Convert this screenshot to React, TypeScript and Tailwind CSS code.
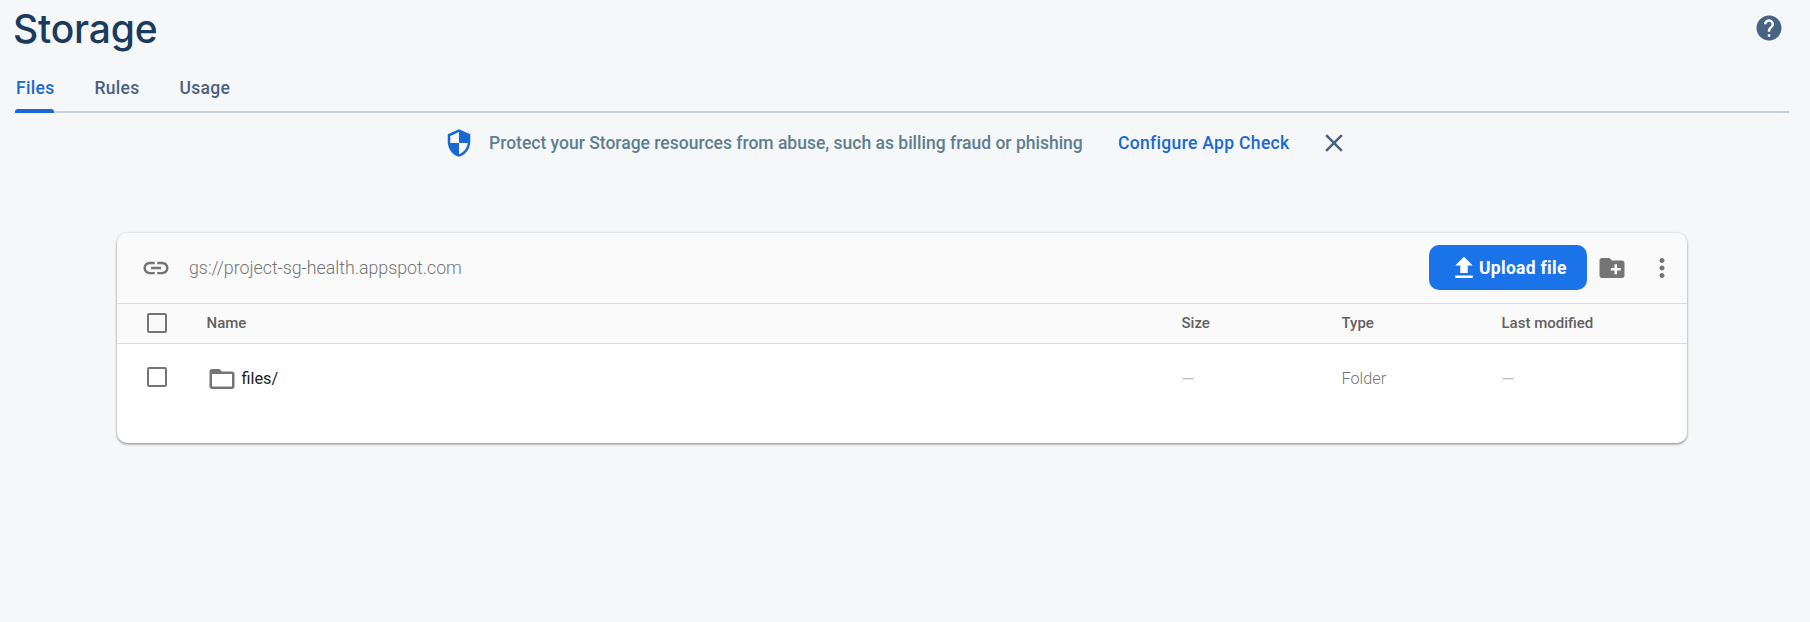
import type { ReactNode } from 'react';

function Icon({ d, className = '' }: { d: string; className?: string }) {
  return (
    <svg viewBox="0 0 24 24" className={`h-[30px] w-[30px] shrink-0 fill-current ${className}`} aria-hidden="true">
      <path d={d} />
    </svg>
  );
}

const icons = {
  help: 'M12 2C6.48 2 2 6.48 2 12s4.48 10 10 10 10-4.48 10-10S17.52 2 12 2zm1 17h-2v-2h2v2zm2.07-7.75l-.9.92C13.45 12.9 13 13.5 13 15h-2v-.5c0-1.1.45-2.1 1.17-2.83l1.24-1.26c.37-.36.59-.86.59-1.41 0-1.1-.9-2-2-2s-2 .9-2 2H8c0-2.21 1.79-4 4-4s4 1.79 4 4c0 .88-.36 1.68-.93 2.25z',
  shield: 'M12 1L3 5v6c0 5.55 3.84 10.74 9 12 5.16-1.26 9-6.45 9-12V5l-9-4zm0 10.99h7c-.53 4.12-3.28 7.79-7 8.94V12H5V6.3l7-3.11v8.8z',
  close: 'M19 6.41L17.59 5 12 10.59 6.41 5 5 6.41 10.59 12 5 17.59 6.41 19 12 13.41 17.59 19 19 17.59 13.41 12z',
  link: 'M3.9 12c0-1.71 1.39-3.1 3.1-3.1h4V7H7c-2.76 0-5 2.24-5 5s2.24 5 5 5h4v-1.9H7c-1.71 0-3.1-1.39-3.1-3.1zM8 13h8v-2H8v2zm9-6h-4v1.9h4c1.71 0 3.1 1.39 3.1 3.1s-1.39 3.1-3.1 3.1h-4V17h4c2.76 0 5-2.24 5-5s-2.24-5-5-5z',
  upload: 'M5 20h14v-2H5v2zm0-10h4v6h6v-6h4l-7-7-7 7z',
  newFolder: 'M20 6h-8l-2-2H4c-1.11 0-1.99.89-1.99 2L2 18c0 1.11.89 2 2 2h16c1.11 0 2-.89 2-2V8c0-1.11-.89-2-2-2zm-1 8h-3v3h-2v-3h-3v-2h3V9h2v3h3v2z',
  more: 'M12 8c1.1 0 2-.9 2-2s-.9-2-2-2-2 .9-2 2 .9 2 2 2zm0 2c-1.1 0-2 .9-2 2s.9 2 2 2 2-.9 2-2-.9-2-2-2zm0 6c-1.1 0-2 .9-2 2s.9 2 2 2 2-.9 2-2-.9-2-2-2z',
  folder: 'M20 6h-8l-2-2H4c-1.1 0-1.99.9-1.99 2L2 18c0 1.1.9 2 2 2h16c1.1 0 2-.9 2-2V8c0-1.1-.9-2-2-2zm0 12H4V8h16v10z',
};

function Tab({ children, active = false }: { children: ReactNode; active?: boolean }) {
  return (
    <button
      className={`flex h-[50px] flex-col justify-between pt-[13px] text-[17.5px] leading-6 font-medium tracking-[0.3px] ${
        active ? 'text-[#1967d2]' : 'text-[#476282]'
      }`}
    >
      <span className="pl-px">{children}</span>
      {active && <span className="h-1 w-full rounded-t-[3px] bg-[#1967d2]" />}
    </button>
  );
}

function Checkbox() {
  return (
    <span className="mb-[2px] block h-5 w-5 rounded-[2px] border-2 border-[#757575]" role="checkbox" aria-checked="false" />
  );
}

const columns = 'grid grid-cols-[60px_975px_160px_160px_1fr] pl-[30px]';

export default function App() {
  return (
    <div className="min-h-[622px] bg-[#f6f7f9] pr-[21px] pl-[15px] font-['Roboto',sans-serif]">
      <header className="flex h-[63px] justify-between pr-[5px]">
        <h1 className="-ml-[2px] pt-[4px] font-['Inter',sans-serif] text-[39px] leading-[50px] font-[450] tracking-[-0.2px] text-[#1a3b5c]">
          Storage
        </h1>
        <Icon d={icons.help} className="mt-[13px] text-[#476282]" />
      </header>

      <nav className="flex h-[50px] gap-[39px] border-b-2 border-[#c3d0e0]">
        <Tab active>Files</Tab>
        <Tab>Rules</Tab>
        <Tab>Usage</Tab>
      </nav>

      <section className="flex h-[60px] items-center pl-[429px] text-[17.5px] font-medium">
        <Icon d={icons.shield} className="text-[#1967d2]" />
        <p className="ml-[15px] w-[629px] whitespace-nowrap text-[#5c7e8f]">
          Protect your Storage resources from abuse, such as billing fraud or phishing
        </p>
        <a className="w-[201px] whitespace-nowrap text-[#1967d2] tracking-[0.32px]">Configure App Check</a>
        <Icon d={icons.close} className="text-[#476282]" />
      </section>

      <main className="mt-[60px] ml-[102px] h-[210px] w-[1570px] overflow-hidden rounded-[10px] bg-white shadow-[0_1px_3px_rgba(0,0,0,0.3),0_2px_2px_rgba(0,0,0,0.12),0_0_2px_rgba(0,0,0,0.12)]">
        <div className="flex h-[71px] items-center border-b border-[#dcdcdc] bg-[#fafafa] pr-[10.5px] pb-px pl-[24px] text-[#757575]">
          <Icon d={icons.link} />
          <span className="ml-[18px] flex-1 pt-[2px] text-[17.8px] font-[350]">gs://project-sg-health.appspot.com</span>
          <button className="flex h-[45px] w-[158px] items-center rounded-[10px] bg-[#1a73e8] pl-5 text-[17.5px] font-bold tracking-[0.3px] whitespace-nowrap text-white">
            <Icon d={icons.upload} className="mt-px" />
            <span className="pt-[2px]">Upload file</span>
          </button>
          <Icon d={icons.newFolder} className="ml-[9.5px]" />
          <Icon d={icons.more} className="ml-5" />
        </div>

        <div className={`${columns} h-10 items-center border-b border-[#dcdcdc] bg-[#fafafa] text-[15px] font-medium text-[#616161]`}>
          <Checkbox />
          <span className="-ml-[0.5px]">Name</span>
          <span className="-ml-[0.5px]">Size</span>
          <span className="-ml-[0.5px]">Type</span>
          <span className="-ml-[0.5px]">Last modified</span>
        </div>

        <div className={`${columns} h-[68px] items-center text-[16.25px] text-[#757575]`}>
          <Checkbox />
          <span className="flex items-center pt-[2px] text-[#212121]">
            <Icon d={icons.folder} className="mr-[5px] -ml-[0.5px] text-[#757575]" />
            files/
          </span>
          <span className="-ml-[0.5px] pt-[4px] text-[#bdbdbd]">—</span>
          <span className="-ml-[0.5px] pt-[2px] font-[350]">Folder</span>
          <span className="-ml-[0.5px] pt-[4px] text-[#bdbdbd]">—</span>
        </div>
      </main>
    </div>
  );
}
